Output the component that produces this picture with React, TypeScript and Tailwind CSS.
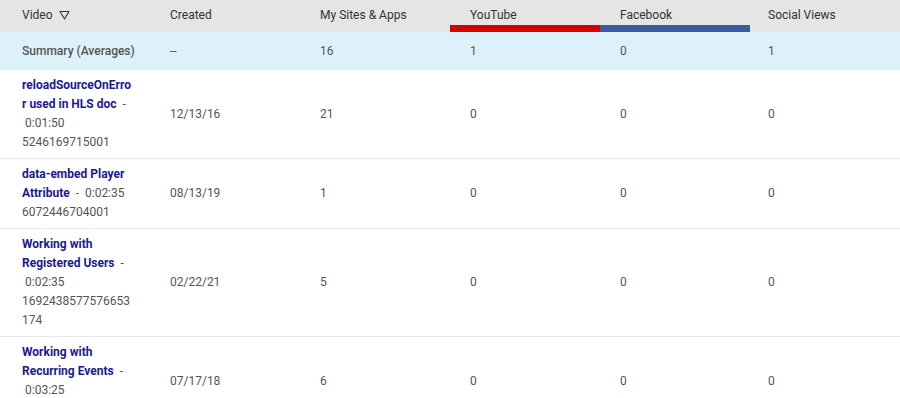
type Row = {
  title: string
  duration: string
  id: string
  created: string
  sites: string
  youtube: string
  facebook: string
  social: string
}

const rows: Row[] = [
  { title: 'reloadSourceOnError used in HLS doc', duration: '0:01:50', id: '5246169715001', created: '12/13/16', sites: '21', youtube: '0', facebook: '0', social: '0' },
  { title: 'data-embed Player Attribute', duration: '0:02:35', id: '6072446704001', created: '08/13/19', sites: '1', youtube: '0', facebook: '0', social: '0' },
  { title: 'Working with Registered Users', duration: '0:02:35', id: '1692438577576653174', created: '02/22/21', sites: '5', youtube: '0', facebook: '0', social: '0' },
  { title: 'Working with Recurring Events', duration: '0:03:25', id: '6085312840001', created: '07/17/18', sites: '6', youtube: '0', facebook: '0', social: '0' },
]

function SortIcon() {
  return (
    <svg width="11" height="10" viewBox="0 0 11 10" className="ml-[6px] inline-block align-[-1px]">
      <path d="M1 1.5 H10 L5.5 9 Z" fill="none" stroke="#333" strokeWidth="1.1" strokeLinejoin="round" />
    </svg>
  )
}

function Head({ label, pad = 'pl-[20px]', bar, children }: { label: string; pad?: string; bar?: string; children?: React.ReactNode }) {
  return (
    <th className="p-0 font-normal text-left align-top">
      <div className="h-[32px] flex flex-col">
        <div className={`${pad} h-[25px] pt-[6px] leading-[19px]`}>
          {label}
          {children}
        </div>
        {bar && <div className={`h-[7px] ${bar}`} />}
      </div>
    </th>
  )
}

export default function App() {
  const cell = 'pl-[20px] pr-[16px] align-middle text-left'
  const first = 'pl-[22px] pr-[16px] align-middle text-left'
  const last = 'pl-[18px] pr-[16px] align-middle text-left'
  return (
    <div className="w-[900px] h-[398px] overflow-hidden bg-white text-[12px] leading-[19px] text-[#555]" style={{ fontFamily: 'Roboto, "Liberation Sans", sans-serif' }}>
      <table className="w-full table-fixed border-collapse">
        <colgroup>
          <col className="w-[150px]" />
          <col className="w-[150px]" />
          <col className="w-[150px]" />
          <col className="w-[150px]" />
          <col className="w-[150px]" />
          <col className="w-[150px]" />
        </colgroup>
        <thead>
          <tr className="bg-[#e5e5e5] text-[#333]">
            <Head label="Video" pad="pl-[22px]"><SortIcon /></Head>
            <Head label="Created" />
            <Head label="My Sites & Apps" />
            <Head label="YouTube" bar="bg-[#d50000]" />
            <Head label="Facebook" bar="bg-[#3b5a9a]" />
            <Head label="Social Views" pad="pl-[18px]" />
          </tr>
        </thead>
        <tbody>
          <tr className="bg-[#dcf1fa] h-[38px]">
            <td className={`${first} font-medium whitespace-nowrap`}>Summary (Averages)</td>
            <td className={cell}>--</td>
            <td className={cell}>16</td>
            <td className={cell}>1</td>
            <td className={cell}>0</td>
            <td className={last}>1</td>
          </tr>
          {rows.map((r) => (
            <tr key={r.id} className="border-b border-[#e9e9e9]">
              <td className={`${first} py-[6px] break-words`}>
                <a href="#" className="font-bold text-[#1a1a8e]">{r.title}</a>
                <span className="ml-[6px]">-</span>{' '}
                <span className="inline-block pl-[3px]">{r.duration}</span>
                <br />
                {r.id}
              </td>
              <td className={cell}>{r.created}</td>
              <td className={cell}>{r.sites}</td>
              <td className={cell}>{r.youtube}</td>
              <td className={cell}>{r.facebook}</td>
              <td className={last}>{r.social}</td>
            </tr>
          ))}
        </tbody>
      </table>
    </div>
  )
}
